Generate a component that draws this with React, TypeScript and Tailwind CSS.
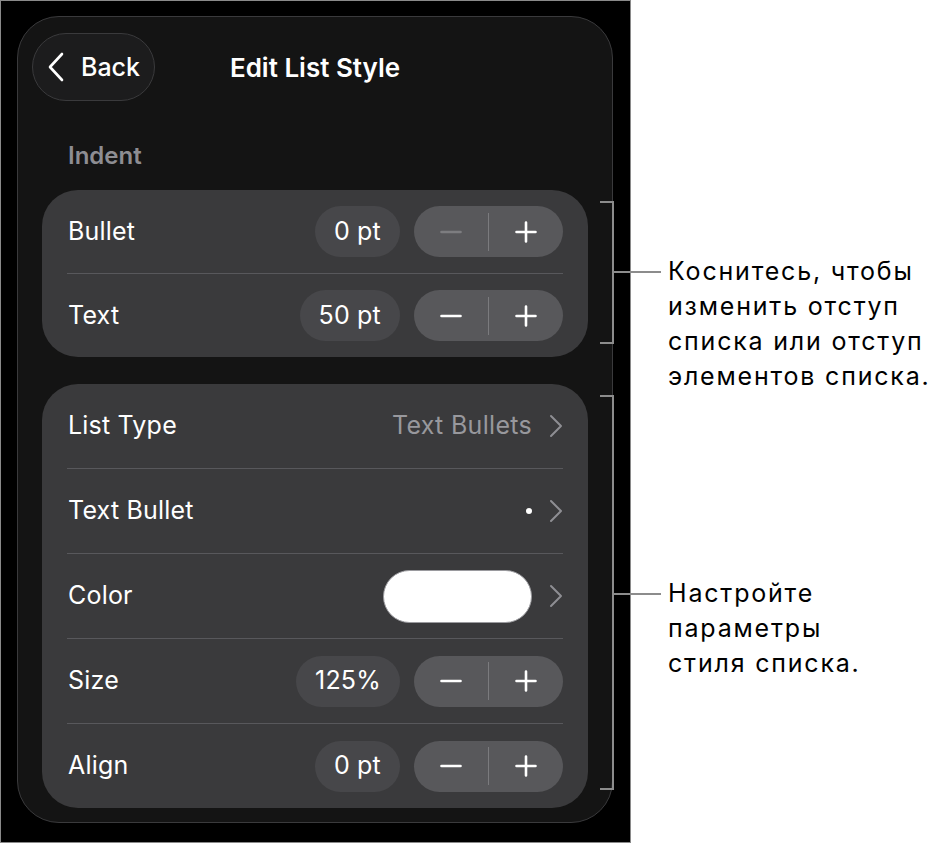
import * as React from 'react';

const font = { fontFamily: 'Inter, "Noto Sans", sans-serif' };

function Chevron({ className }: { className?: string }) {
  return (
    <svg width="14" height="24" viewBox="0 0 14 24" className={className}>
      <path d="M2 2 L12 12 L2 22" fill="none" stroke="currentColor" strokeWidth="2" strokeLinecap="round" strokeLinejoin="round" />
    </svg>
  );
}

function Stepper({ minusDisabled }: { minusDisabled?: boolean }) {
  return (
    <div className="flex h-[51px] w-[149px] items-center rounded-full bg-[#58585b]">
      <div className={`flex h-full flex-1 items-center justify-center ${minusDisabled ? 'text-[#7d7d80]' : 'text-white'}`}>
        <svg width="22" height="22" viewBox="0 0 22 22">
          <path d="M1.5 11 H20.5" stroke="currentColor" strokeWidth="2.6" strokeLinecap="round" />
        </svg>
      </div>
      <div className="h-[38px] w-px bg-[#7b7b7e]" />
      <div className="flex h-full flex-1 items-center justify-center text-white">
        <svg width="22" height="22" viewBox="0 0 22 22">
          <path d="M1.5 11 H20.5 M11 1.5 V20.5" stroke="currentColor" strokeWidth="2.6" strokeLinecap="round" />
        </svg>
      </div>
    </div>
  );
}

function ValueRow({ label, value, minusDisabled, short }: { label: string; value: string; minusDisabled?: boolean; short?: boolean }) {
  return (
    <div className={`flex ${short ? 'h-[83px]' : 'h-[84px]'} items-center pl-[26px] pr-[25px]`}>
      <span className="flex-1 text-[25px] tracking-[0.2px] text-white">{label}</span>
      <div className="mr-[14px] flex h-[51px] items-center rounded-full bg-[#47474a] px-[19px] text-[25px] tracking-[0.2px] text-white">
        {value}
      </div>
      <Stepper minusDisabled={minusDisabled} />
    </div>
  );
}

function Sep() {
  return <div className="mx-[25px] h-px bg-[#58585c]" />;
}

function LinkRow({ label, children }: { label: string; children: React.ReactNode }) {
  return (
    <div className="flex h-[84px] items-center pl-[26px] pr-[25px]">
      <span className="flex-1 text-[25px] tracking-[0.2px] text-white">{label}</span>
      {children}
      <Chevron className="ml-[17px] text-[#8e8e93]" />
    </div>
  );
}

export default function App() {
  return (
    <div className="flex h-[843px] w-[939px] bg-white" style={font}>
      <div className="h-[843px] w-[631px] shrink-0 border border-[#8a8a8a] bg-black pl-[16px] pt-[15px]">
        <div className="h-[807px] w-[596px] rounded-[42px] border border-[#3a3a3c] bg-[#141414] px-[14px] pt-[16px]">
          {/* header */}
          <div className="relative flex h-[68px] items-center">
            <button className="flex h-[68px] w-[123px] items-center rounded-full border border-[#3a3a3c] bg-[#1c1c1d] pl-[14px] text-white">
              <svg width="18" height="30" viewBox="0 0 18 30">
                <path d="M15 2 L3 15 L15 28" fill="none" stroke="currentColor" strokeWidth="2.6" strokeLinecap="round" strokeLinejoin="round" />
              </svg>
              <span className="ml-[16px] mt-[2px] text-[25px] font-medium">Back</span>
            </button>
            <div className="pointer-events-none absolute inset-0 flex items-center justify-center">
              <span className="text-[26px] font-semibold text-white">Edit List Style</span>
            </div>
          </div>

          <div className="px-[10px]">
            <div className="pb-[19px] pl-[26px] pt-[40px] text-[24px] font-semibold leading-[30px] text-[#8d8d92]">Indent</div>

            <div className="rounded-[36px] bg-[#3a3a3c]">
              <ValueRow label="Bullet" value="0 pt" minusDisabled short />
              <Sep />
              <ValueRow label="Text" value="50 pt" short />
            </div>

            <div className="mt-[27px] rounded-[36px] bg-[#3a3a3c]">
              <LinkRow label="List Type">
                <span className="text-[25px] tracking-[0.3px] text-[#98989d]">Text Bullets</span>
              </LinkRow>
              <Sep />
              <LinkRow label="Text Bullet">
                <span className="h-[6px] w-[6px] rounded-full bg-white" />
              </LinkRow>
              <Sep />
              <LinkRow label="Color">
                <span className="h-[53px] w-[149px] rounded-full border border-[#9a9a9e] bg-white" />
              </LinkRow>
              <Sep />
              <ValueRow label="Size" value="125%" />
              <Sep />
              <ValueRow label="Align" value="0 pt" />
            </div>
          </div>
        </div>
      </div>

      {/* callouts */}
      <div className="flex-1 pl-[37px] text-[25px] leading-[35px] tracking-[1.8px] text-black">
        <div className="pt-[254px]">
          Коснитесь, чтобы
          <br />
          изменить отступ
          <br />
          списка или отступ
          <br />
          элементов списка.
        </div>
        <div className="mt-[182px]">
          Настройте
          <br />
          параметры
          <br />
          стиля списка.
        </div>
      </div>

      {/* bracket lines over the panel edge */}
      <svg className="pointer-events-none absolute left-0 top-0" width="939" height="843">
        <g fill="none" stroke="#8c8c8c" strokeWidth="2">
          <path d="M600 202 H613 V343 H600" />
          <path d="M613 272 H661" />
          <path d="M600 396 H613 V789 H600" />
          <path d="M613 594 H661" />
        </g>
      </svg>
    </div>
  );
}
